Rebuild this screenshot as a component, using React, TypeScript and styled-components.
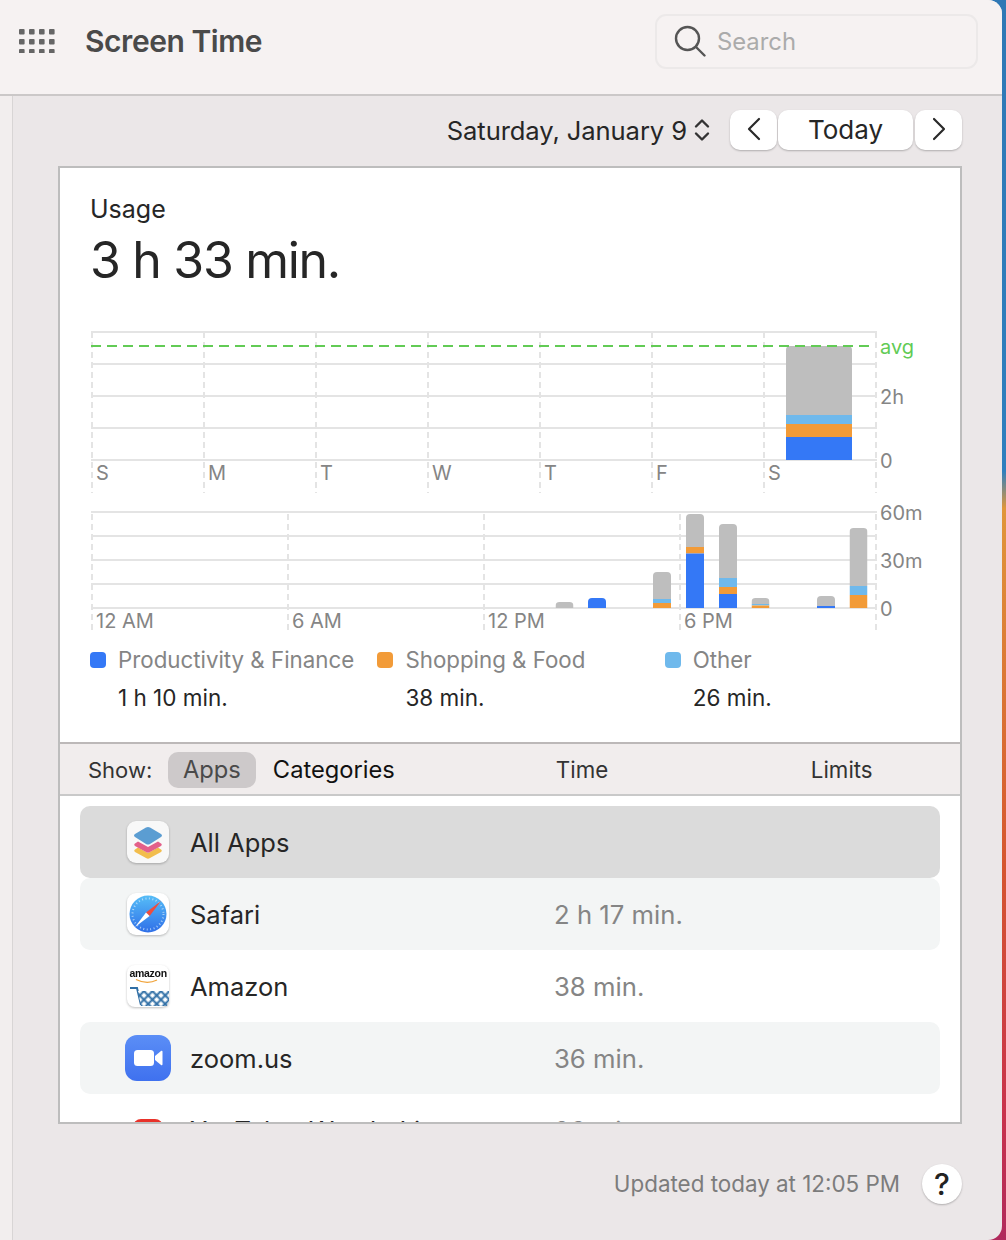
import React from "react";
import styled, { createGlobalStyle } from "styled-components";

const Global = createGlobalStyle`
  html, body { margin: 0; padding: 0; }
  body {
    width: 1006px;
    height: 1240px;
    overflow: hidden;
    background: linear-gradient(180deg, #2f78b5 0%, #2f7fbe 38%, #e0963a 41%, #d5552f 70%, #c8324c 90%, #b02a5c 100%);
    font-family: Inter, "Liberation Sans", sans-serif;
    color: #262626;
  }
`;

const Window = styled.div`
  width: 1002px;
  height: 1240px;
  display: flex;
  flex-direction: column;
  background: #ebe7e8;
  border-radius: 0 14px 14px 0;
  overflow: hidden;
`;

const TopBar = styled.header`
  height: 96px;
  flex: none;
  display: flex;
  align-items: center;
  padding: 0 24px 12px 19px;
  box-sizing: border-box;
  background: #f6f2f2;
  border-bottom: 2px solid #cbc8c8;
`;

const Title = styled.h1`
  margin: 0 0 0 30px;
  font-size: 30px;
  font-weight: 600;
  letter-spacing: -0.45px;
  color: #4a4a4a;
  flex: 1;
`;

const SearchBox = styled.div`
  width: 323px;
  height: 55px;
  box-sizing: border-box;
  display: flex;
  align-items: center;
  gap: 11px;
  padding: 0 17px;
  border: 2px solid #ece9e9;
  border-radius: 11px;
  font-size: 23.8px;
  color: #ababab;
`;

const Body = styled.div`
  flex: 1;
  display: flex;
  min-height: 0;
`;

const Rail = styled.div`
  width: 12px;
  flex: none;
  background: #f2eeee;
  border-right: 1px solid #d8d5d5;
`;

const Main = styled.main`
  flex: 1;
  display: flex;
  flex-direction: column;
  padding: 14px 40px 0 45px;
`;

const DateRow = styled.div`
  height: 40px;
  display: flex;
  justify-content: flex-end;
  align-items: center;
`;

const DateLabel = styled.span`
  font-size: 25.6px;
  letter-spacing: -0.1px;
`;

const Stepper = styled.svg`
  margin: 0 19px 0 7px;
`;

const NavButton = styled.button<{ $wide?: boolean }>`
  width: ${(p) => (p.$wide ? "135px" : "47px")};
  height: 40px;
  margin: 0 ${(p) => (p.$wide ? "1px" : "0")} 0 1px;
  border: 0;
  padding: 0 0 2px;
  display: flex;
  align-items: center;
  justify-content: center;
  background: #fff;
  border-radius: 10px;
  box-shadow: 0 1px 2px rgba(0, 0, 0, 0.25);
  font-family: inherit;
  font-size: 26px;
  color: #262626;
`;

const Card = styled.section`
  height: 958px;
  margin-top: 16px;
  box-sizing: border-box;
  display: flex;
  flex-direction: column;
  background: #fff;
  border: 2px solid #bdbdbd;
  overflow: hidden;
`;

const Summary = styled.div`
  height: 574px;
  flex: none;
  box-sizing: border-box;
  padding: 26px 0 0 30px;
`;

const UsageLabel = styled.div`
  font-size: 25px;
  line-height: 30px;
`;

const UsageValue = styled.div`
  margin-top: 5px;
  font-size: 50px;
  line-height: 62px;
  letter-spacing: -1.3px;
`;

const ChartSvg = styled.svg`
  display: block;
  text {
    font-family: Inter, "Liberation Sans", sans-serif;
    font-size: 20px;
    fill: #858585;
  }
`;

const DayChart = styled(ChartSvg)`
  margin-top: 39px;
`;

const HourChart = styled(ChartSvg)`
  margin-top: 6px;
`;

const Legend = styled.div`
  display: grid;
  grid-template-columns: repeat(3, 287.4px);
  margin-top: 7px;
`;

const LegendItem = styled.div`
  display: grid;
  grid-template-columns: 16px auto;
  column-gap: 12px;
  align-items: center;
`;

const Swatch = styled.span<{ $color: string }>`
  width: 16px;
  height: 16px;
  border-radius: 4px;
  background: ${(p) => p.$color};
`;

const LegendName = styled.span`
  font-size: 22.3px;
  line-height: 38px;
  color: #858585;
  white-space: nowrap;
`;

const LegendValue = styled.span`
  grid-column: 2;
  font-size: 22.5px;
  line-height: 38px;
`;

const Toolbar = styled.div`
  height: 54px;
  flex: none;
  box-sizing: border-box;
  display: flex;
  align-items: center;
  padding: 1px 0 0 28px;
  background: #f1eded;
  border-top: 2px solid #bcb8b8;
  border-bottom: 2px solid #c9c9c9;
  font-size: 22.3px;
`;

const ShowLabel = styled.span`
  width: 80px;
  font-size: 22px;
  color: #333;
`;

const Tab = styled.span<{ $active?: boolean }>`
  height: 36px;
  padding: 0 15px;
  display: flex;
  align-items: center;
  border-radius: 10px;
  font-size: 23.7px;
  background: ${(p) => (p.$active ? "#cdc9ca" : "transparent")};
  color: ${(p) => (p.$active ? "#4a4a4a" : "#111")};
  margin-right: 2px;
`;

const ColumnHead = styled.span<{ $width: number; $offset?: number }>`
  width: ${(p) => p.$width}px;
  margin-left: ${(p) => p.$offset ?? 0}px;
  color: #333;
`;

const List = styled.div`
  flex: 1;
  min-height: 0;
  overflow: hidden;
  padding: 10px 20px 0;
`;

const Row = styled.div<{ $tone: "selected" | "stripe" | "plain" }>`
  height: 72px;
  display: flex;
  align-items: center;
  border-radius: 10px;
  background: ${(p) =>
    p.$tone === "selected" ? "#dbdbdb" : p.$tone === "stripe" ? "#f3f5f5" : "transparent"};
`;

const IconSlot = styled.div`
  width: 110px;
  flex: none;
  display: flex;
  justify-content: center;
  padding-left: 25px;
  box-sizing: border-box;
  svg {
    display: block;
  }
`;

const AppName = styled.span`
  width: 364px;
  flex: none;
  font-size: 25.5px;
  white-space: nowrap;
`;

const AppTime = styled.span`
  font-size: 25.7px;
  color: #858585;
`;

const Footer = styled.footer`
  flex: 1;
  display: flex;
  justify-content: flex-end;
  align-items: flex-start;
  padding-top: 40px;
`;

const Updated = styled.span`
  font-size: 22.4px;
  line-height: 40px;
  color: #7c7c7c;
`;

const HelpButton = styled.button`
  width: 40px;
  height: 40px;
  margin-left: 22px;
  border: 0;
  padding: 0;
  border-radius: 50%;
  background: #fff;
  box-shadow: 0 1px 2px rgba(0, 0, 0, 0.25);
  font-family: inherit;
  font-size: 30px;
  font-weight: 500;
  color: #222;
`;

const GRID = "#e4e4e4";
const BLUE = "#3478f6";
const ORANGE = "#f29b38";
const SKY = "#6fb9ec";
const GRAY = "#bebebe";

type Segment = [string, number, number];

// top of stack is rounded, the rest are plain rects
const Bar = ({ x, w, top, segs }: { x: number; w: number; top: number; segs: Segment[] }) => {
  const bottom = segs.length ? segs[segs.length - 1][2] : top;
  return (
    <g>
      <clipPath id={`bar-${x}-${top}`}>
        <path d={`M${x} ${bottom}V${top + 4}q0-4 4-4H${x + w - 4}q4 0 4 4V${bottom}Z`} />
      </clipPath>
      <g clipPath={`url(#bar-${x}-${top})`}>
        {segs.map(([color, y1, y2]) => (
          <rect key={color} x={x} y={y1} width={w} height={y2 - y1} fill={color} />
        ))}
      </g>
    </g>
  );
};

const dayBars = (
  <Bar
    x={786}
    w={66}
    top={346}
    segs={[
      [GRAY, 346, 415],
      [SKY, 415, 424],
      [ORANGE, 424, 437],
      [BLUE, 437, 460],
    ]}
  />
);

const hourBars: { x: number; top: number; segs: Segment[] }[] = [
  { x: 555.5, top: 602, segs: [[GRAY, 602, 608]] },
  { x: 588, top: 598, segs: [[BLUE, 598, 608]] },
  { x: 653, top: 572, segs: [[GRAY, 572, 599], [SKY, 599, 603], [ORANGE, 603, 608]] },
  { x: 686, top: 514, segs: [[GRAY, 514, 547], [ORANGE, 547, 553.5], [BLUE, 553.5, 608]] },
  { x: 719, top: 524, segs: [[GRAY, 524, 578], [SKY, 578, 587], [ORANGE, 587, 594], [BLUE, 594, 608]] },
  { x: 751.5, top: 598, segs: [[GRAY, 598, 604], [SKY, 604, 605.5], [ORANGE, 605.5, 608]] },
  { x: 817, top: 596, segs: [[GRAY, 596, 606], [BLUE, 606, 608]] },
  { x: 849.5, top: 528, segs: [[GRAY, 528, 586], [SKY, 586, 595], [ORANGE, 595, 608]] },
];

const DayUsage = () => (
  <DayChart width={842} height={164} viewBox="90 330 842 164">
    {[332, 364, 396, 428, 460].map((y) => (
      <line key={y} x1={91} x2={877} y1={y} y2={y} stroke={GRID} strokeWidth={2} />
    ))}
    {[92, 204, 316, 428, 540, 652, 764, 876].map((x) => (
      <line key={x} x1={x} x2={x} y1={332} y2={493} stroke={GRID} strokeWidth={2} strokeDasharray="6 4" />
    ))}
    {dayBars}
    <line x1={91} x2={870} y1={346} y2={346} stroke="#62cb55" strokeWidth={2} strokeDasharray="10 6" />
    {[["S", 96], ["M", 208], ["T", 320], ["W", 432], ["T", 544], ["F", 656], ["S", 768]].map(([label, x]) => (
      <text key={x} x={x} y={480}>{label}</text>
    ))}
    <text x={880} y={354} style={{ fill: "#62cb55" }}>avg</text>
    <text x={880} y={404}>2h</text>
    <text x={880} y={468}>0</text>
  </DayChart>
);

const HourUsage = () => (
  <HourChart width={842} height={134} viewBox="90 500 842 134">
    {[512, 536, 560, 584, 608].map((y) => (
      <line key={y} x1={91} x2={877} y1={y} y2={y} stroke={GRID} strokeWidth={2} />
    ))}
    {[92, 288, 484, 680, 876].map((x) => (
      <line key={x} x1={x} x2={x} y1={514} y2={632} stroke={GRID} strokeWidth={2} strokeDasharray="6 4" />
    ))}
    {hourBars.map((b) => (
      <Bar key={b.x} x={b.x} w={18} top={b.top} segs={b.segs} />
    ))}
    {[["12 AM", 96], ["6 AM", 292], ["12 PM", 488], ["6 PM", 684]].map(([label, x]) => (
      <text key={x} x={x} y={628}>{label}</text>
    ))}
    <text x={880} y={520}>60m</text>
    <text x={880} y={568}>30m</text>
    <text x={880} y={616}>0</text>
  </HourChart>
);

const AppsGrid = () => (
  <svg width="36" height="24" viewBox="0 0 36 24" fill="#666">
    {[0, 10, 20].map((y) =>
      [0, 10, 20, 30].map((x) => <rect key={`${x}-${y}`} x={x} y={y} width="5.6" height="5.6" rx="1" />)
    )}
  </svg>
);

const Magnifier = () => (
  <svg width="32" height="32" viewBox="0 0 32 32" fill="none" stroke="#555" strokeWidth="2.4" strokeLinecap="round">
    <circle cx="13.5" cy="13.5" r="11.5" />
    <path d="M22 22l8.5 8.5" />
  </svg>
);

const Chevron = ({ dir }: { dir: "left" | "right" }) => (
  <svg width="14" height="24" viewBox="0 0 14 24" fill="none" stroke="#2a2a2a" strokeWidth="2.2" strokeLinecap="round" strokeLinejoin="round">
    <path d={dir === "left" ? "M12 2L2 12l10 10" : "M2 2l10 10L2 22"} />
  </svg>
);

const iconShadow = { filter: "drop-shadow(0 1px 1px rgba(0,0,0,0.25))" };

const AllAppsIcon = () => (
  <svg width="42" height="42" viewBox="0 0 42 42" style={iconShadow}>
    <rect width="42" height="42" rx="9" fill="#f8f8f8" />
    <path d="M8 28.5l3-2 10 5.5 10-5.5 3 2c1 .8 1 1.7 0 2.4l-11 6.2c-1.4.7-2.6.7-4 0L8 30.9c-1-.7-1-1.6 0-2.4z" fill="#f2bd4d" />
    <path d="M8 22.5l3-2 10 5.5 10-5.5 3 2c1 .8 1 1.7 0 2.4l-11 6.2c-1.4.7-2.6.7-4 0L8 24.9c-1-.7-1-1.6 0-2.4z" fill="#e3608a" />
    <path d="M8 13l11-6.4c1.4-.8 2.6-.8 4 0L34 13c1.3.9 1.3 2.1 0 3L23 22.9c-1.4.8-2.6.8-4 0L8 16c-1.3-.9-1.3-2.1 0-3z" fill="#5b9dd2" />
  </svg>
);

const SafariIcon = () => (
  <svg width="42" height="42" viewBox="0 0 42 42" style={iconShadow}>
    <defs>
      <linearGradient id="safari-face" x1="0" y1="0" x2="0" y2="1">
        <stop offset="0" stopColor="#56bdf7" />
        <stop offset="1" stopColor="#2f6fe8" />
      </linearGradient>
    </defs>
    <rect width="42" height="42" rx="9" fill="#fff" />
    <circle cx="21" cy="21" r="18.5" fill="url(#safari-face)" />
    <circle cx="21" cy="21" r="15.5" fill="none" stroke="#d7ecfb" strokeWidth="2" strokeDasharray="1 2.5" opacity="0.7" />
    <path d="M34 8L22.6 23 19 19.4z" fill="#ee4c3e" />
    <path d="M8 34L19 19.4 22.6 23z" fill="#fff" />
  </svg>
);

const AmazonWord = styled.text`
  font-family: "Liberation Sans", sans-serif;
  font-size: 10.5px;
  font-weight: 700;
  letter-spacing: -0.3px;
  fill: #111;
`;

const AmazonIcon = () => (
  <svg width="42" height="42" viewBox="0 0 42 42" style={iconShadow}>
    <defs>
      <pattern id="basket" width="6" height="6" patternUnits="userSpaceOnUse" patternTransform="rotate(45)">
        <rect width="6" height="6" fill="#2f6ea5" />
        <rect x="1.5" y="1.5" width="4" height="4" fill="#fff" />
      </pattern>
    </defs>
    <rect width="42" height="42" rx="8" fill="#fff" />
    <AmazonWord x="2.5" y="12">amazon</AmazonWord>
    <path d="M9 14.5c7 3.5 15 3.5 21 .5" fill="none" stroke="#f0a33a" strokeWidth="1.3" />
    <path d="M3 23h7l4 17" fill="none" stroke="#2f6ea5" strokeWidth="2" />
    <path d="M11 26h31v10l-2 5H14z" fill="url(#basket)" />
  </svg>
);

const ZoomIcon = () => (
  <svg width="46" height="46" viewBox="0 0 46 46">
    <defs>
      <linearGradient id="zoom-face" x1="0" y1="0" x2="0" y2="1">
        <stop offset="0" stopColor="#5b8ef6" />
        <stop offset="1" stopColor="#3f71ef" />
      </linearGradient>
    </defs>
    <rect width="46" height="46" rx="12" fill="url(#zoom-face)" />
    <rect x="9" y="15" width="20" height="16" rx="3.5" fill="#fff" />
    <path d="M30 21l6-5c.8-.6 1.5-.3 1.5.7v12.6c0 1-.7 1.3-1.5.7l-6-5z" fill="#fff" />
  </svg>
);

const YouTubeIcon = () => (
  <svg width="42" height="42" viewBox="0 0 42 42">
    <rect width="42" height="42" rx="9" fill="#fff" />
    <rect x="6" y="10" width="30" height="30" rx="8" fill="#e8322a" />
  </svg>
);

const apps = [
  { name: "All Apps", time: "", tone: "selected", icon: <AllAppsIcon /> },
  { name: "Safari", time: "2 h 17 min.", tone: "stripe", icon: <SafariIcon /> },
  { name: "Amazon", time: "38 min.", tone: "plain", icon: <AmazonIcon /> },
  { name: "zoom.us", time: "36 min.", tone: "stripe", icon: <ZoomIcon /> },
  { name: "YouTube: Watch, Listen", time: "26 min.", tone: "plain", icon: <YouTubeIcon /> },
] as const;

const legend = [
  { name: "Productivity & Finance", value: "1 h 10 min.", color: BLUE },
  { name: "Shopping & Food", value: "38 min.", color: ORANGE },
  { name: "Other", value: "26 min.", color: SKY },
];

const App = () => {
  return (
    <Window>
      <Global />
      <TopBar>
        <AppsGrid />
        <Title>Screen Time</Title>
        <SearchBox>
          <Magnifier />
          Search
        </SearchBox>
      </TopBar>
      <Body>
        <Rail />
        <Main>
          <DateRow>
            <DateLabel>Saturday, January 9</DateLabel>
            <Stepper width="16" height="24" viewBox="0 0 16 24" fill="none" stroke="#333" strokeWidth="2.4" strokeLinecap="round" strokeLinejoin="round">
              <path d="M2 8.5L8 2.5l6 6M2 15.5l6 6 6-6" />
            </Stepper>
            <NavButton aria-label="Previous"><Chevron dir="left" /></NavButton>
            <NavButton $wide>Today</NavButton>
            <NavButton aria-label="Next"><Chevron dir="right" /></NavButton>
          </DateRow>
          <Card>
            <Summary>
              <UsageLabel>Usage</UsageLabel>
              <UsageValue>3 h 33 min.</UsageValue>
              <DayUsage />
              <HourUsage />
              <Legend>
                {legend.map((l) => (
                  <LegendItem key={l.name}>
                    <Swatch $color={l.color} />
                    <LegendName>{l.name}</LegendName>
                    <LegendValue>{l.value}</LegendValue>
                  </LegendItem>
                ))}
              </Legend>
            </Summary>
            <Toolbar>
              <ShowLabel>Show:</ShowLabel>
              <Tab $active>Apps</Tab>
              <Tab>Categories</Tab>
              <ColumnHead $width={255} $offset={144}>Time</ColumnHead>
              <ColumnHead $width={80}>Limits</ColumnHead>
            </Toolbar>
            <List>
              {apps.map((a) => (
                <Row key={a.name} $tone={a.tone}>
                  <IconSlot>{a.icon}</IconSlot>
                  <AppName>{a.name}</AppName>
                  <AppTime>{a.time}</AppTime>
                </Row>
              ))}
            </List>
          </Card>
          <Footer>
            <Updated>Updated today at 12:05 PM</Updated>
            <HelpButton>?</HelpButton>
          </Footer>
        </Main>
      </Body>
    </Window>
  );
};

export default App;
